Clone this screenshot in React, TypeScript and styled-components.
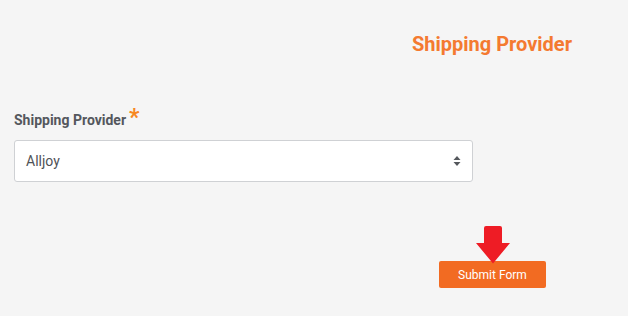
import React from "react";
import styled, { createGlobalStyle } from "styled-components";

const Global = createGlobalStyle`
  html, body { margin: 0; padding: 0; background: #f5f5f5; }
  body { font-family: Roboto, "Liberation Sans", sans-serif; }
`;

const Page = styled.div`
  width: 628px;
  height: 316px;
  box-sizing: border-box;
  padding: 32px 14px 0 14px;
  background: #f5f5f5;
`;

const Header = styled.div`
  display: flex;
  justify-content: flex-end;
  padding-right: 42px;
`;

const Title = styled.h1`
  margin: 0;
  font-size: 20px;
  line-height: 24px;
  font-weight: 700;
  color: #f47a30;
`;

const Field = styled.div`
  margin-top: 55px;
  width: 459px;
  display: flex;
  flex-direction: column;
  gap: 11px;
`;

const Label = styled.label`
  display: flex;
  align-items: flex-start;
  font-size: 14px;
  line-height: 18px;
  font-weight: 700;
  color: #54575d;
`;

const Required = styled.span`
  color: #f7871f;
  font-size: 23px;
  line-height: 14px;
  margin-left: 3px;
`;

const SelectBox = styled.div`
  position: relative;
  height: 42px;
  box-sizing: border-box;
  border: 1px solid #cfd1d4;
  border-radius: 3px;
  background: #fff;
  display: flex;
  align-items: center;
  padding: 0 11px;
  font-size: 14px;
  color: #4f5257;
`;

const Value = styled.span`
  flex: 1;
`;

const Footer = styled.div`
  margin-top: 79px;
  display: flex;
  justify-content: flex-end;
  padding-right: 68px;
`;

const ButtonWrap = styled.div`
  position: relative;
`;

const Button = styled.button`
  width: 107px;
  height: 27px;
  border: none;
  border-radius: 2px;
  background: #f26b22;
  color: #fff;
  font-family: Roboto, "Liberation Sans", sans-serif;
  font-size: 12px;
  font-weight: 400;
  padding: 0;
`;

const Pointer = styled.svg`
  position: absolute;
  left: 36px;
  top: -35px;
`;

export default function App() {
  return (
    <>
      <Global />
      <Page>
        <Header>
          <Title>Shipping Provider</Title>
        </Header>
        <Field>
          <Label>
            Shipping Provider<Required>*</Required>
          </Label>
          <SelectBox>
            <Value>Alljoy</Value>
            <svg width="8" height="12" viewBox="0 0 8 12">
              <path d="M4 1 L7.5 5 L0.5 5 Z" fill="#55585d" />
              <path d="M4 11 L7.5 7 L0.5 7 Z" fill="#55585d" />
            </svg>
          </SelectBox>
        </Field>
        <Footer>
          <ButtonWrap>
            <Button>Submit Form</Button>
            <Pointer width="36" height="38" viewBox="0 0 36 38">
              <path
                d="M9 2 Q9 0 11 0 L25 0 Q27 0 27 2 L27 17 L35 17 L18 37.5 L1 17 L9 17 Z"
                fill="#ee1c25"
              />
            </Pointer>
          </ButtonWrap>
        </Footer>
      </Page>
    </>
  );
}
